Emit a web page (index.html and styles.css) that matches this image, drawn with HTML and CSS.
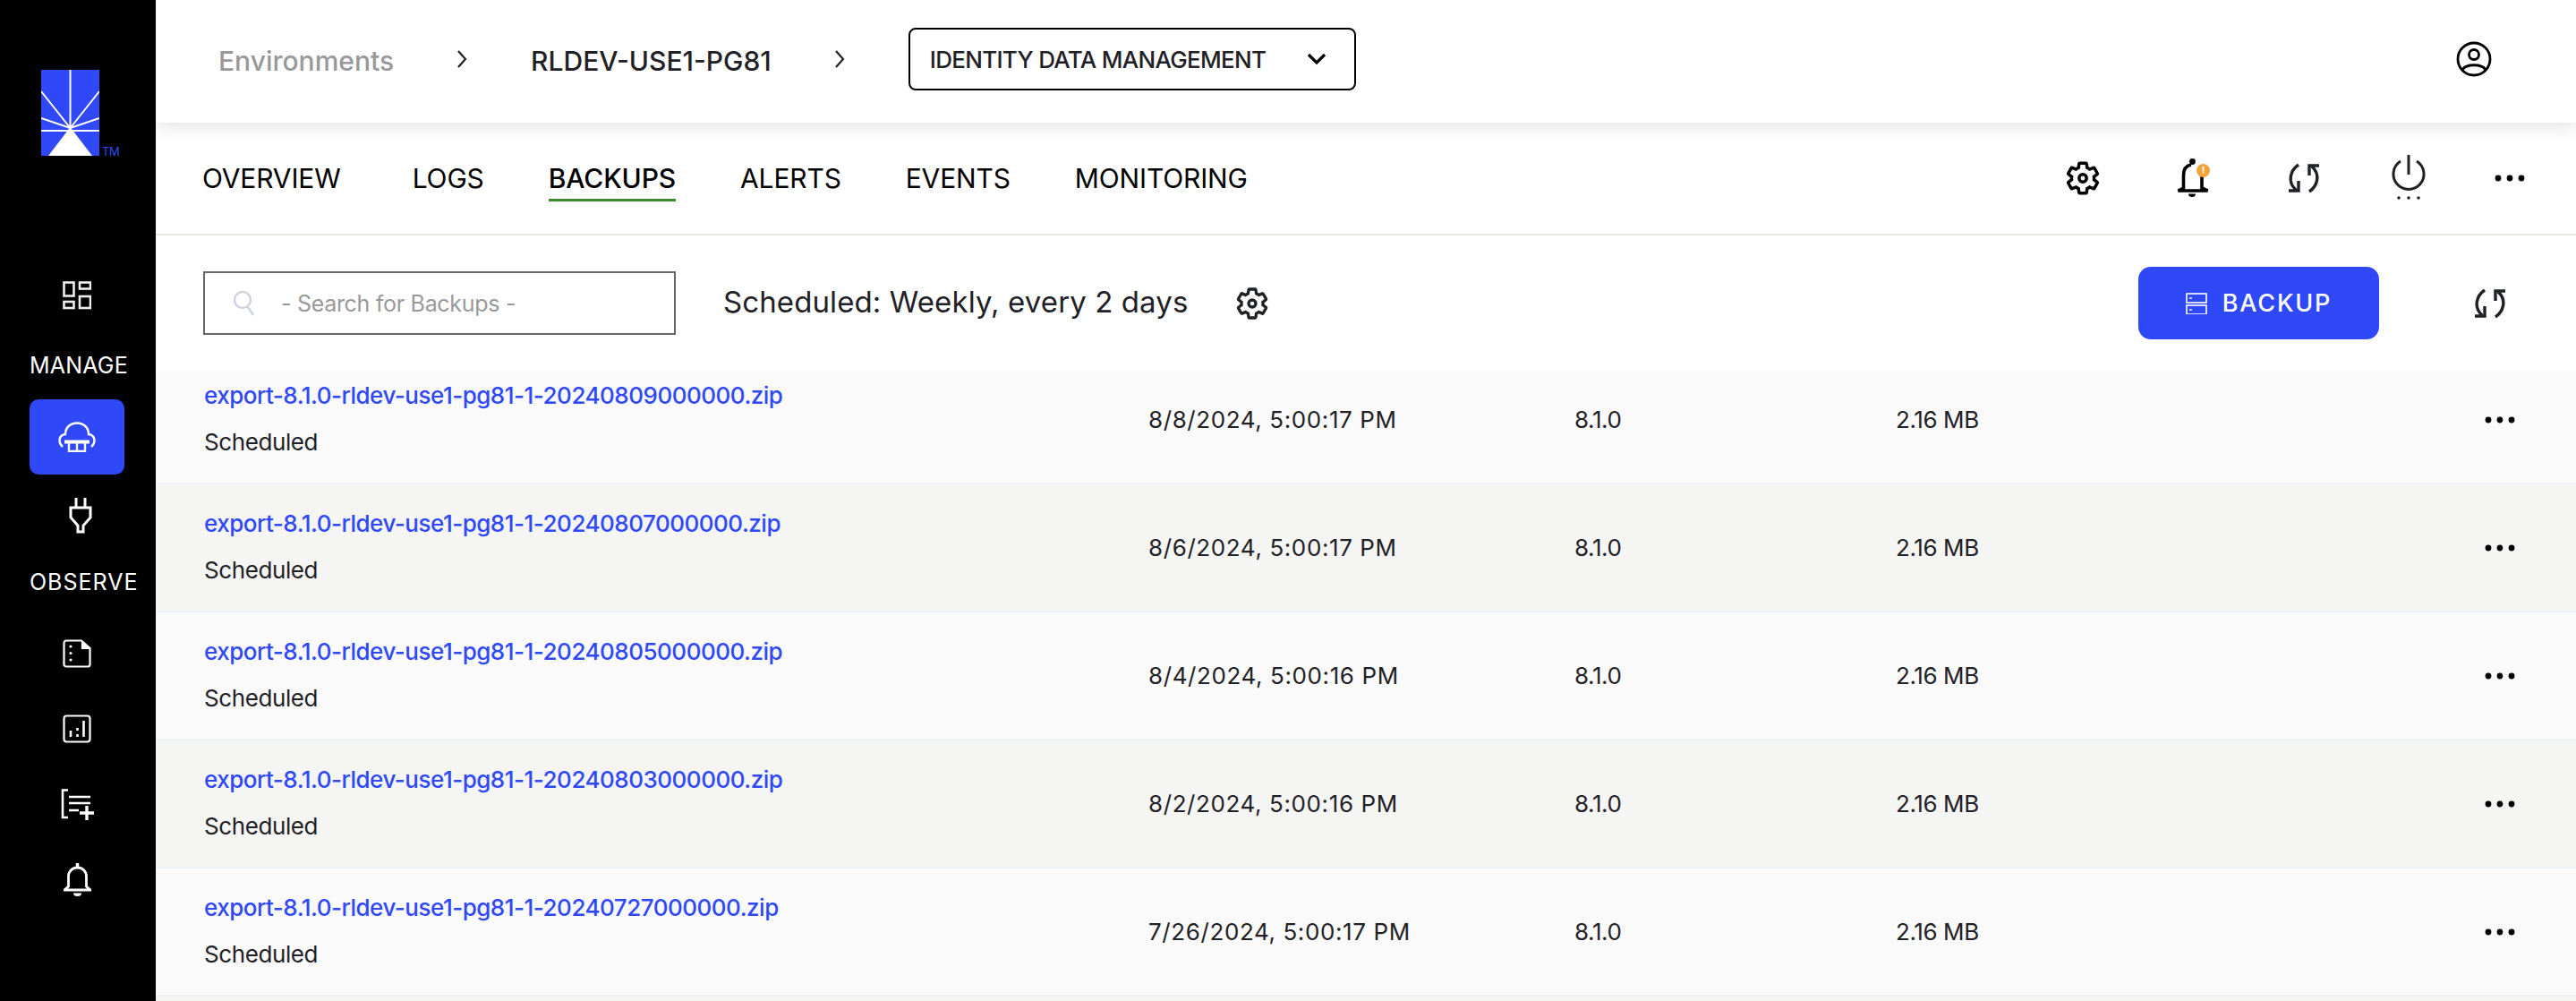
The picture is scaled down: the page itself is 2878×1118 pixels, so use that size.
FILE: index.html
```html
<!DOCTYPE html>
<html lang="en">
<head>
    <meta charset="UTF-8">
    <meta name="viewport" content="width=device-width, initial-scale=1.0">
    <title>Backups</title>
    <link rel="stylesheet" href="styles.css">
</head>
<body>
    <svg class="sprite" width="0" height="0">
        <symbol id="sync" viewBox="0 0 36 36">
            <path d="M12 3C3 9 -1 22 9 31M1 32H12V21M24 33C33 27 37 14 27 5M35 4H24V15" fill="none" stroke="currentColor" stroke-width="3.4"/>
        </symbol>
        <symbol id="gear" viewBox="0 0 24 24">
            <path d="M19.14 12.94c.04-.3.06-.61.06-.94 0-.32-.02-.64-.07-.94l2.03-1.58c.18-.14.23-.41.12-.61l-1.92-3.32c-.12-.22-.37-.29-.59-.22l-2.39.96c-.5-.38-1.03-.7-1.62-.94l-.36-2.54c-.04-.24-.24-.41-.48-.41h-3.84c-.24 0-.43.17-.47.41l-.36 2.54c-.59.24-1.13.57-1.62.94l-2.39-.96c-.22-.08-.47 0-.59.22L2.74 8.87c-.12.21-.08.47.12.61l2.03 1.58c-.05.3-.09.63-.09.94s.02.64.07.94l-2.03 1.58c-.18.14-.23.41-.12.61l1.92 3.32c.12.22.37.29.59.22l2.39-.96c.5.38 1.03.7 1.62.94l.36 2.54c.05.24.24.41.48.41h3.84c.24 0 .44-.17.47-.41l.36-2.54c.59-.24 1.13-.56 1.62-.94l2.39.96c.22.08.47 0 .59-.22l1.92-3.32c.12-.22.07-.47-.12-.61l-2.01-1.58z" fill="none" stroke="currentColor" stroke-width="2"/>
            <circle cx="12" cy="12" r="2.4" fill="none" stroke="currentColor" stroke-width="2"/>
        </symbol>
        <symbol id="more" viewBox="0 0 34 8">
            <circle cx="4" cy="4" r="3.4"/><circle cx="17" cy="4" r="3.4"/><circle cx="30" cy="4" r="3.4"/>
        </symbol>
    </svg>

    <aside class="sidebar">
        <div class="logo">
            <svg width="65" height="96" viewBox="0 0 65 96">
                <rect width="65" height="96" fill="#2f49f8"/>
                <path d="M32.5 65V0M32.5 65L0 24M32.5 65L65 24M32.5 65L0 54M32.5 65L65 54M0 68H65" stroke="#fff" stroke-width="2"/>
                <path d="M32.5 64L57 96H8z" fill="#fff"/>
            </svg>
            <span class="tm">TM</span>
        </div>

        <div class="side-item item-first">
            <svg width="32" height="32" viewBox="0 0 32 32" fill="none" stroke="#eee" stroke-width="2.6">
                <rect x="1.5" y="1.5" width="11" height="15"/><rect x="19" y="1.5" width="12" height="7"/>
                <rect x="1.5" y="23" width="11" height="7"/><rect x="19" y="17" width="12" height="13"/>
            </svg>
        </div>
        <div class="side-label label-manage">MANAGE</div>
        <div class="side-item active">
            <svg width="42" height="34" viewBox="0 0 42 34" fill="none" stroke="#fff" stroke-width="2.4">
                <path d="M5 28C0 24 0 15 8 14C8 6 14 1.500 21 1.500S34 6 34 14C42 15 42 24 37 28"/>
                <path d="M7 22.500H35" stroke-width="4"/>
                <path d="M12 23V33H30V23M21 23V33"/>
            </svg>
        </div>
        <div class="side-item plug-item">
            <svg width="26" height="40" viewBox="0 0 26 40" fill="none" stroke="#fff" stroke-width="3">
                <path d="M8 0V11M18 0V11M2 11H24V22L16 31V38H10V31L2 22z"/>
            </svg>
        </div>
        <div class="side-label label-observe">OBSERVE</div>
        <div class="side-item">
            <svg width="32" height="32" viewBox="0 0 32 32" fill="none" stroke="#fff" stroke-width="2.2">
                <path d="M4 1.500H21L30.500 10V28A2.500 2.500 0 0 1 28 30.500H4A2.500 2.500 0 0 1 1.500 28V4A2.500 2.500 0 0 1 4 1.500z"/>
                <path d="M22 2V10H30" fill="#fff"/>
                <g fill="#fff" stroke="none"><circle cx="9" cy="8" r="1.600"/><circle cx="9" cy="15.500" r="1.600"/><circle cx="9" cy="23" r="1.600"/></g>
            </svg>
        </div>
        <div class="side-item">
            <svg width="32" height="32" viewBox="0 0 32 32" fill="none" stroke="#fff" stroke-width="2.2">
                <rect x="1.500" y="1.500" width="29" height="29" rx="3"/>
                <path d="M9 25V18M16.500 25V22M16.500 18V15M23.500 25V7" stroke-width="2.600"/>
            </svg>
        </div>
        <div class="side-item">
            <svg width="37" height="35" viewBox="0 0 37 35" fill="none" stroke="#fff" stroke-width="2.600">
                <path d="M8 1.500H2V32H8"/>
                <path d="M9 9H33M9 16H33M9 24H20"/>
                <path d="M29 19V35M21 27H37" stroke-width="3.400"/>
            </svg>
        </div>
        <div class="side-item">
            <svg width="31" height="37" viewBox="0 0 31 37" fill="none" stroke="#fff" stroke-width="2.800">
                <path d="M5.500 26V15C5.500 9 10 5 15.500 5S25.500 9 25.500 15V26L30 30H1z"/>
                <path d="M15.500 0V5" stroke-width="3.500"/>
                <path d="M11 33.500H20A4.500 3.500 0 0 1 11 33.500z" fill="#fff" stroke="none"/>
            </svg>
        </div>
    </aside>

    <main class="main">
        <header class="topbar">
            <span class="crumb crumb-muted">Environments</span>
            <svg class="crumb-arrow" width="12" height="22" viewBox="0 0 12 22" fill="none" stroke="#1f2126" stroke-width="2.200"><path d="M2 2L10 11L2 20"/></svg>
            <span class="crumb">RLDEV-USE1-PG81</span>
            <svg class="crumb-arrow" width="12" height="22" viewBox="0 0 12 22" fill="none" stroke="#1f2126" stroke-width="2.200"><path d="M2 2L10 11L2 20"/></svg>
            <div class="env-select">
                <span>IDENTITY DATA MANAGEMENT</span>
                <svg width="22" height="14" viewBox="0 0 22 14" fill="none" stroke="#000" stroke-width="3.200"><path d="M2 2L11 11L20 2"/></svg>
            </div>
            <svg class="profile" width="40" height="40" viewBox="0 0 40 40" fill="none" stroke="#000" stroke-width="2.800">
                <circle cx="20" cy="20" r="18"/><circle cx="20" cy="15" r="5.500"/>
                <path d="M7 32C11 25 29 25 33 32"/>
            </svg>
        </header>

        <nav class="tabs">
            <a class="tab">OVERVIEW</a>
            <a class="tab">LOGS</a>
            <a class="tab current">BACKUPS</a>
            <a class="tab">ALERTS</a>
            <a class="tab">EVENTS</a>
            <a class="tab">MONITORING</a>
            <div class="tab-icons">
                <svg class="icon-gear" width="42" height="42"><use href="#gear"/></svg>
                <div class="bell">
                    <svg width="36" height="44" viewBox="0 0 36 44" fill="none" stroke="#000" stroke-width="3.600">
                        <path d="M16 7C10 8 7.500 13 7.500 19V33L1.500 36H34.500L28 33V18"/>
                        <circle cx="17.500" cy="3.500" r="3.400" fill="#000" stroke="none"/>
                        <path d="M13 39.500H21A4 3.500 0 0 1 13 39.500z" fill="#000" stroke="none"/>
                    </svg>
                    <span class="badge">!</span>
                </div>
                <svg class="icon-sync" width="36" height="36"><use href="#sync"/></svg>
                <svg class="icon-power" width="38" height="52" viewBox="0 0 38 52" fill="none" stroke="#1f2126" stroke-width="3">
                    <path d="M10 7A17 17 0 1 0 28 7"/><path d="M19 0V22"/>
                    <g fill="#1f2126" stroke="none"><circle cx="8" cy="48" r="1.800"/><circle cx="19" cy="48" r="1.800"/><circle cx="30" cy="48" r="1.800"/></g>
                </svg>
                <svg class="icon-more" width="34" height="8"><use href="#more"/></svg>
            </div>
        </nav>

        <section class="toolbar">
            <div class="search">
                <svg width="24" height="32" viewBox="0 0 24 32" fill="none" stroke="#ccd3de" stroke-width="2.400">
                    <circle cx="11" cy="12" r="9"/><path d="M17 20L23 29"/>
                </svg>
                <span class="placeholder">- Search for Backups -</span>
            </div>
            <span class="schedule">Scheduled: Weekly, every 2 days</span>
            <svg class="schedule-gear" width="40" height="40"><use href="#gear"/></svg>
            <button class="backup-btn">
                <svg width="24" height="24" viewBox="0 0 24 24" fill="none" stroke="#fff" stroke-width="1.600">
                    <rect x="1" y="1" width="22" height="10"/><rect x="1" y="14" width="22" height="10"/>
                    <path d="M4 6H7M4 19H7"/>
                </svg>
                BACKUP
            </button>
            <svg class="toolbar-sync" width="36" height="36"><use href="#sync"/></svg>
        </section>

        <section class="backup-list">
            <div class="row">
                <div class="name"><a>export-8.1.0-rldev-use1-pg81-1-20240809000000.zip</a><span>Scheduled</span></div>
                <div class="date">8/8/2024, 5:00:17 PM</div><div>8.1.0</div><div>2.16 MB</div>
                <svg class="row-more" width="34" height="8"><use href="#more"/></svg>
            </div>
            <div class="row">
                <div class="name"><a>export-8.1.0-rldev-use1-pg81-1-20240807000000.zip</a><span>Scheduled</span></div>
                <div class="date">8/6/2024, 5:00:17 PM</div><div>8.1.0</div><div>2.16 MB</div>
                <svg class="row-more" width="34" height="8"><use href="#more"/></svg>
            </div>
            <div class="row">
                <div class="name"><a>export-8.1.0-rldev-use1-pg81-1-20240805000000.zip</a><span>Scheduled</span></div>
                <div class="date">8/4/2024, 5:00:16 PM</div><div>8.1.0</div><div>2.16 MB</div>
                <svg class="row-more" width="34" height="8"><use href="#more"/></svg>
            </div>
            <div class="row">
                <div class="name"><a>export-8.1.0-rldev-use1-pg81-1-20240803000000.zip</a><span>Scheduled</span></div>
                <div class="date">8/2/2024, 5:00:16 PM</div><div>8.1.0</div><div>2.16 MB</div>
                <svg class="row-more" width="34" height="8"><use href="#more"/></svg>
            </div>
            <div class="row">
                <div class="name"><a>export-8.1.0-rldev-use1-pg81-1-20240727000000.zip</a><span>Scheduled</span></div>
                <div class="date">7/26/2024, 5:00:17 PM</div><div>8.1.0</div><div>2.16 MB</div>
                <svg class="row-more" width="34" height="8"><use href="#more"/></svg>
            </div>
            <div class="row"></div>
        </section>
    </main>
</body>
</html>
```
FILE: styles.css
```css
* {
    box-sizing: border-box;
}

body {
    font-family: Inter, "Liberation Sans", sans-serif;
    color: #1f2126;
    background: #fff;
    margin: 0;
    height: 100vh;
    display: flex;
    overflow: hidden;
}

.sprite {
    position: absolute;
}

/* sidebar */
.sidebar {
    width: 174px;
    flex-shrink: 0;
    background: #000;
    color: #fff;
    padding-top: 78px;
    padding-left: 33px;
}

.logo {
    display: flex;
    align-items: flex-end;
    gap: 3px;
    height: 96px;
    margin-left: 13px;
}

.tm {
    color: #2f49f8;
    font-size: 13px;
    line-height: 10px;
    letter-spacing: -0.5px;
}

.side-item {
    width: 106px;
    height: 84px;
    display: flex;
    align-items: center;
    justify-content: center;
}

.item-first {
    margin-top: 114px;
}

.side-item.active {
    background: #2f49f8;
    border-radius: 10px;
    margin-top: 23px;
}

.plug-item {
    margin-top: 4px;
    padding-left: 8px;
}

.side-label {
    font-size: 25px;
    line-height: 30px;
    letter-spacing: 0.2px;
    white-space: nowrap;
}

.label-manage {
    margin-top: 21px;
}

.label-observe {
    margin-top: 17px;
    margin-bottom: 23px;
    letter-spacing: 1px;
}

/* main column */
.main {
    flex: 1;
    min-width: 0;
    display: flex;
    flex-direction: column;
}

.topbar {
    height: 137px;
    flex-shrink: 0;
    display: flex;
    align-items: center;
    padding-left: 70px;
    padding-right: 94px;
    padding-bottom: 5px;
    background: #fff;
    box-shadow: 0 4px 20px rgba(0, 0, 0, 0.12);
    position: relative;
}

.crumb {
    font-size: 30px;
    font-weight: 500;
    padding-top: 3px;
    white-space: nowrap;
}

.crumb-muted {
    color: #999;
}

.crumb-arrow {
    margin-left: 70px;
    margin-right: 71px;
}

.env-select {
    width: 500px;
    height: 70px;
    border: 2px solid #000;
    border-radius: 8px;
    display: flex;
    align-items: center;
    justify-content: space-between;
    padding: 0 31px 0 22px;
    font-size: 26px;
    font-weight: 500;
    letter-spacing: -0.7px;
}

.profile {
    margin-left: auto;
}

.tabs {
    height: 126px;
    flex-shrink: 0;
    display: flex;
    align-items: center;
    padding-left: 52px;
    padding-right: 57px;
    border-bottom: 2px solid #e8e8e2;
}

.tab {
    font-size: 30px;
    letter-spacing: -0.15px;
    margin-right: 72px;
    color: #000;
    position: relative;
}

.tab:first-child {
    margin-right: 80px;
}

.tab.current {
    font-weight: 500;
}

.tab.current::after {
    content: "";
    position: absolute;
    left: 0;
    right: 0;
    bottom: -8px;
    height: 3px;
    background: #3c8a2e;
}

.tab-icons {
    margin-left: auto;
    display: flex;
    align-items: center;
}

.icon-gear {
    color: #000;
}

.bell {
    position: relative;
    width: 36px;
    height: 44px;
    margin-left: 84px;
}

.badge {
    position: absolute;
    top: 6px;
    right: -1px;
    width: 15px;
    height: 15px;
    border-radius: 50%;
    background: #f2a33a;
    color: #fff;
    font-size: 11px;
    font-weight: 700;
    line-height: 15px;
    text-align: center;
}

.icon-sync {
    margin-left: 88px;
}

.icon-power {
    margin-left: 80px;
}

.icon-more {
    margin-left: 77px;
}

.toolbar {
    height: 151px;
    flex-shrink: 0;
    display: flex;
    align-items: center;
    padding-left: 53px;
    padding-right: 78px;
    position: relative;
    background: #fff;
}

.search {
    width: 528px;
    height: 71px;
    border: 2px solid #666;
    display: flex;
    align-items: center;
    padding-left: 31px;
    gap: 30px;
}

.placeholder {
    font-size: 25px;
    color: #999;
    letter-spacing: -0.3px;
}

.schedule {
    font-size: 33px;
    letter-spacing: 0.1px;
    margin-left: 53px;
    padding-bottom: 3px;
    white-space: nowrap;
}

.schedule-gear {
    margin-left: 52px;
}

.backup-btn {
    margin-left: auto;
    width: 269px;
    height: 81px;
    background: #2f49f8;
    color: #fff;
    border: none;
    border-radius: 14px;
    font-family: inherit;
    font-size: 27px;
    font-weight: 500;
    letter-spacing: 1.8px;
    display: flex;
    align-items: center;
    justify-content: center;
    gap: 17px;
}

.toolbar-sync {
    margin-left: 106px;
}

/* backups table */
.backup-list {
    flex: 1;
    min-height: 0;
    overflow: hidden;
}

.row {
    height: 143px;
    display: grid;
    grid-template-columns: 1055px 476px 359px 1fr auto;
    align-items: center;
    padding-left: 54px;
    padding-right: 68px;
    font-size: 26px;
    letter-spacing: -0.4px;
    background: #fafafa;
    border-bottom: 2px solid #eef2f7;
}

.row:first-child {
    margin-top: -16px;
}

.row:nth-child(even) {
    background: #f5f5f4;
}

.name {
    display: flex;
    flex-direction: column;
    gap: 23px;
    line-height: 29px;
    padding-bottom: 2px;
}

.name a {
    color: #2f49f8;
    font-weight: 500;
    letter-spacing: -0.5px;
}

.date {
    letter-spacing: 0.6px;
}

.row-more {
    grid-column: 5;
}
```
